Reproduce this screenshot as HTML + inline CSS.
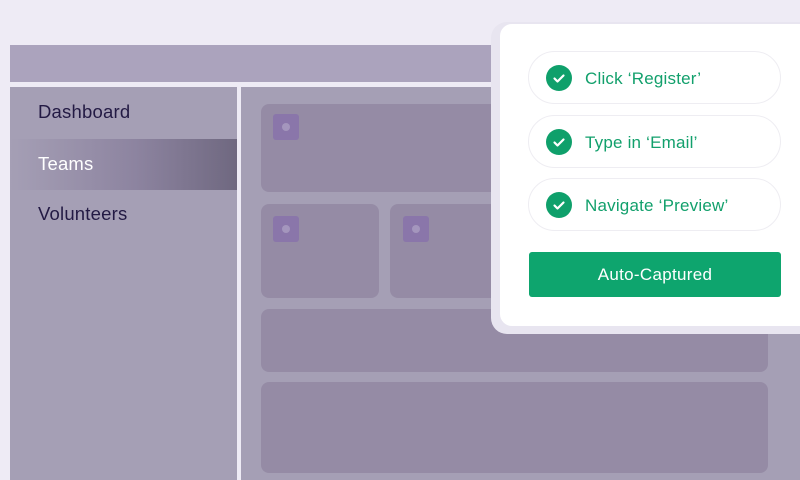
<!DOCTYPE html>
<html><head><style>
body{margin:0;width:800px;height:480px;background:#eeebf5;position:relative;overflow:hidden;font-family:"Liberation Sans",sans-serif}
div{position:absolute;box-sizing:border-box}
.c{background:#958ba5;border-radius:8px}
.ic{width:26px;height:26px;background:#8a76aa;border-radius:3px}
.ic:after{content:"";position:absolute;left:9px;top:9px;width:8px;height:8px;border-radius:50%;background:#a496bd}
.nav{left:38px;font-size:18.5px;color:#231a44;letter-spacing:0.2px}
.pill{left:528px;width:253px;height:53px;border:1.5px solid #eeedf2;border-radius:27px;background:#fff}
.pill .t{left:56px;top:17px;font-size:17px;color:#12a06c;letter-spacing:0.2px}
.chk{left:17px;top:13px;width:26px;height:26px;border-radius:50%;background:#0fa06b}
</style></head><body>
<div style="left:10px;top:45px;width:790px;height:37px;background:#aba3bd"></div>
<div style="left:10px;top:87px;width:227px;height:393px;background:#a59fb5"></div>
<div style="left:10px;top:139px;width:227px;height:51px;background:linear-gradient(90deg,#a59fb5,#8d84a0 55%,#6f6880)"></div>
<div class="nav" style="top:101px">Dashboard</div>
<div class="nav" style="top:153px;color:#fff">Teams</div>
<div class="nav" style="top:203px">Volunteers</div>
<div style="left:241px;top:87px;width:559px;height:393px;background:#a59fb5"></div>
<div class="c" style="left:261px;top:104px;width:507px;height:88px"></div>
<div class="ic" style="left:273px;top:114px"></div>
<div class="c" style="left:261px;top:204px;width:118px;height:94px"></div>
<div class="ic" style="left:273px;top:216px"></div>
<div class="c" style="left:390px;top:204px;width:200px;height:94px"></div>
<div class="ic" style="left:403px;top:216px"></div>
<div class="c" style="left:261px;top:309px;width:507px;height:63px"></div>
<div class="c" style="left:261px;top:382px;width:507px;height:91px"></div>
<div style="left:491px;top:22px;width:330px;height:312px;background:#e8e5f0;border-radius:16px"></div>
<div style="left:500px;top:24px;width:320px;height:302px;background:#fff;border-radius:12px"></div>
<div class="pill" style="top:51px"><div class="chk"><svg width="26" height="26"><path d="M8.5 13.5l3 3 6-6" stroke="#fff" stroke-width="2.2" fill="none" stroke-linecap="round" stroke-linejoin="round"/></svg></div><div class="t">Click ‘Register’</div></div>
<div class="pill" style="top:115px"><div class="chk"><svg width="26" height="26"><path d="M8.5 13.5l3 3 6-6" stroke="#fff" stroke-width="2.2" fill="none" stroke-linecap="round" stroke-linejoin="round"/></svg></div><div class="t">Type in ‘Email’</div></div>
<div class="pill" style="top:178px"><div class="chk"><svg width="26" height="26"><path d="M8.5 13.5l3 3 6-6" stroke="#fff" stroke-width="2.2" fill="none" stroke-linecap="round" stroke-linejoin="round"/></svg></div><div class="t">Navigate ‘Preview’</div></div>
<div style="left:529px;top:252px;width:252px;height:45px;background:#0ea56e;border-radius:3px;color:#fff;font-size:17px;text-align:center;line-height:46px;letter-spacing:0.3px">Auto-Captured</div>
</body></html>
